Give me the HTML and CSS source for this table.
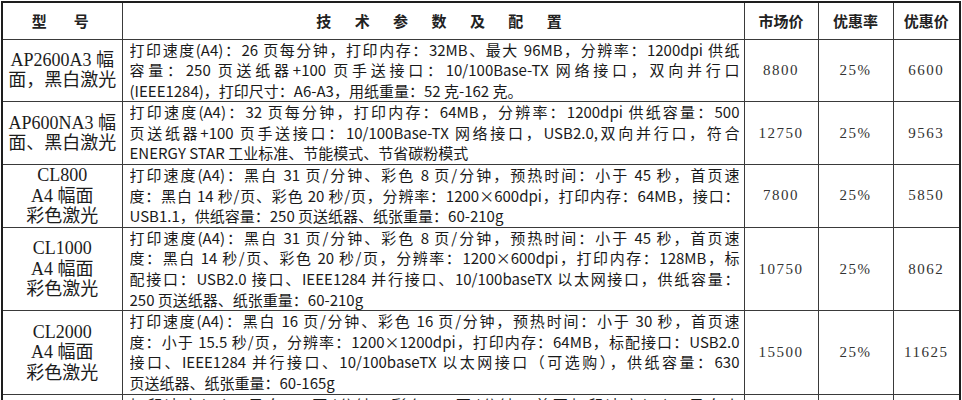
FILE: index.html
```html
<!DOCTYPE html>
<html lang="zh-CN">
<head>
<meta charset="utf-8">
<title>打印机报价</title>
<link rel="stylesheet" href="styles.css">
</head>
<body>
<table class="price-table">
  <colgroup>
    <col class="c-model">
    <col class="c-spec">
    <col class="c-price">
    <col class="c-rate">
    <col class="c-deal">
  </colgroup>
  <thead>
    <tr class="head-row">
      <th class="h-model">型　号</th>
      <th class="h-spec">技 术 参 数 及 配 置</th>
      <th>市场价</th>
      <th>优惠率</th>
      <th>优惠价</th>
    </tr>
  </thead>
  <tbody>
    <tr>
      <td class="model"><span class="m">AP2600A3 幅</span><span class="m">面，黑白激光</span></td>
      <td class="spec">
        <span class="ln">打印速度(A4)：26 页每分钟，打印内存：32MB、最大 96MB，分辨率：1200dpi 供纸</span>
        <span class="ln">容量：250 页送纸器+100 页手送接口：10/100Base-TX 网络接口，双向并行口</span>
        <span class="ln last">(IEEE1284)，打印尺寸：A6-A3，用纸重量：52 克-162 克。</span>
      </td>
      <td class="num">8800</td>
      <td class="num">25%</td>
      <td class="num">6600</td>
    </tr>
    <tr>
      <td class="model"><span class="m">AP600NA3 幅</span><span class="m">面、黑白激光</span></td>
      <td class="spec">
        <span class="ln">打印速度(A4)：32 页每分钟，打印内存：64MB，分辨率：1200dpi 供纸容量：500</span>
        <span class="ln">页送纸器+100 页手送接口：10/100Base-TX 网络接口，USB2.0,双向并行口，符合</span>
        <span class="ln last">ENERGY STAR 工业标准、节能模式、节省碳粉模式</span>
      </td>
      <td class="num">12750</td>
      <td class="num">25%</td>
      <td class="num">9563</td>
    </tr>
    <tr>
      <td class="model"><span class="m">CL800</span><span class="m">A4 幅面</span><span class="m">彩色激光</span></td>
      <td class="spec">
        <span class="ln">打印速度(A4)：黑白 31 页/分钟、彩色 8 页/分钟，预热时间：小于 45 秒，首页速</span>
        <span class="ln">度：黑白 14 秒/页、彩色 20 秒/页，分辨率：1200×600dpi，打印内存：64MB，接口：</span>
        <span class="ln last">USB1.1，供纸容量：250 页送纸器、纸张重量：60-210g</span>
      </td>
      <td class="num">7800</td>
      <td class="num">25%</td>
      <td class="num">5850</td>
    </tr>
    <tr>
      <td class="model"><span class="m">CL1000</span><span class="m">A4 幅面</span><span class="m">彩色激光</span></td>
      <td class="spec">
        <span class="ln">打印速度(A4)：黑白 31 页/分钟、彩色 8 页/分钟，预热时间：小于 45 秒，首页速</span>
        <span class="ln">度：黑白 14 秒/页、彩色 20 秒/页，分辨率：1200×600dpi，打印内存：128MB，标</span>
        <span class="ln">配接口：USB2.0 接口、IEEE1284 并行接口、10/100baseTX 以太网接口，供纸容量：</span>
        <span class="ln last">250 页送纸器、纸张重量：60-210g</span>
      </td>
      <td class="num">10750</td>
      <td class="num">25%</td>
      <td class="num">8062</td>
    </tr>
    <tr>
      <td class="model"><span class="m">CL2000</span><span class="m">A4 幅面</span><span class="m">彩色激光</span></td>
      <td class="spec">
        <span class="ln">打印速度(A4)：黑白 16 页/分钟、彩色 16 页/分钟，预热时间：小于 30 秒，首页速</span>
        <span class="ln">度：小于 15.5 秒/页，分辨率：1200×1200dpi，打印内存：64MB，标配接口：USB2.0</span>
        <span class="ln">接口、IEEE1284 并行接口、10/100baseTX 以太网接口（可选购），供纸容量：630</span>
        <span class="ln last">页送纸器、纸张重量：60-165g</span>
      </td>
      <td class="num">15500</td>
      <td class="num">25%</td>
      <td class="num">11625</td>
    </tr>
    <tr>
      <td class="model"><span class="m"></span><span class="m"></span></td>
      <td class="spec">
        <span class="ln">打印速度(A4)：黑白 25 页/分钟、彩色 25 页/分钟，首页打印速度(A4)：黑白小</span>
        <span class="ln last">于 12 秒/页</span>
      </td>
      <td class="num"></td>
      <td class="num"></td>
      <td class="num"></td>
    </tr>
  </tbody>
</table>
</body>
</html>
```
FILE: styles.css
```css
html, body {
  margin: 0;
  padding: 0;
  background: #ffffff;
}

body {
  padding: 1px 0 0 1px;
  height: 399px;
  overflow: hidden;
}

.price-table {
  border-collapse: collapse;
  table-layout: fixed;
  width: 960px;
  border: 2px solid #1e1e1e;
  color: #1a1a1a;
}

.c-model { width: 120px; }
.c-spec  { width: 622px; }
.c-price { width: 74px; }
.c-rate  { width: 75px; }
.c-deal  { width: 67px; }

.price-table th,
.price-table td {
  border: 1px solid #3a3a3a;
  padding: 0;
  vertical-align: middle;
}

.head-row {
  height: 37px;
}

.head-row th {
  font-family: "Noto Sans CJK SC", "Noto Sans", sans-serif;
  font-weight: 700;
  font-size: 15px;
  line-height: 20px;
  color: #222;
  text-align: center;
  white-space: nowrap;
}

.head-row .h-model {
  letter-spacing: 6px;
  padding-left: 2px;
}

.head-row .h-spec {
  word-spacing: 20px;
  padding-left: 12px;
}

.model {
  font-family: "Liberation Serif", "Noto Sans CJK SC", serif;
  font-size: 18px;
  text-align: center;
  color: #1c1c1c;
}

.m {
  display: block;
  height: 20.6px;
  line-height: 20.6px;
  white-space: nowrap;
  overflow: hidden;
}

.spec {
  font-family: "Noto Sans CJK SC", "Noto Sans", sans-serif;
  font-size: 15px;
  padding: 0 4px 0 7px !important;
  color: #1a1a1a;
}

.ln {
  display: block;
  height: 20.6px;
  line-height: 20.6px;
  text-align: justify;
  text-align-last: justify;
  overflow: hidden;
}

.ln.last {
  text-align-last: left;
}

.num {
  font-family: "Liberation Serif", serif;
  font-size: 15px;
  letter-spacing: 1.5px;
  text-align: center;
  color: #333;
}
```
